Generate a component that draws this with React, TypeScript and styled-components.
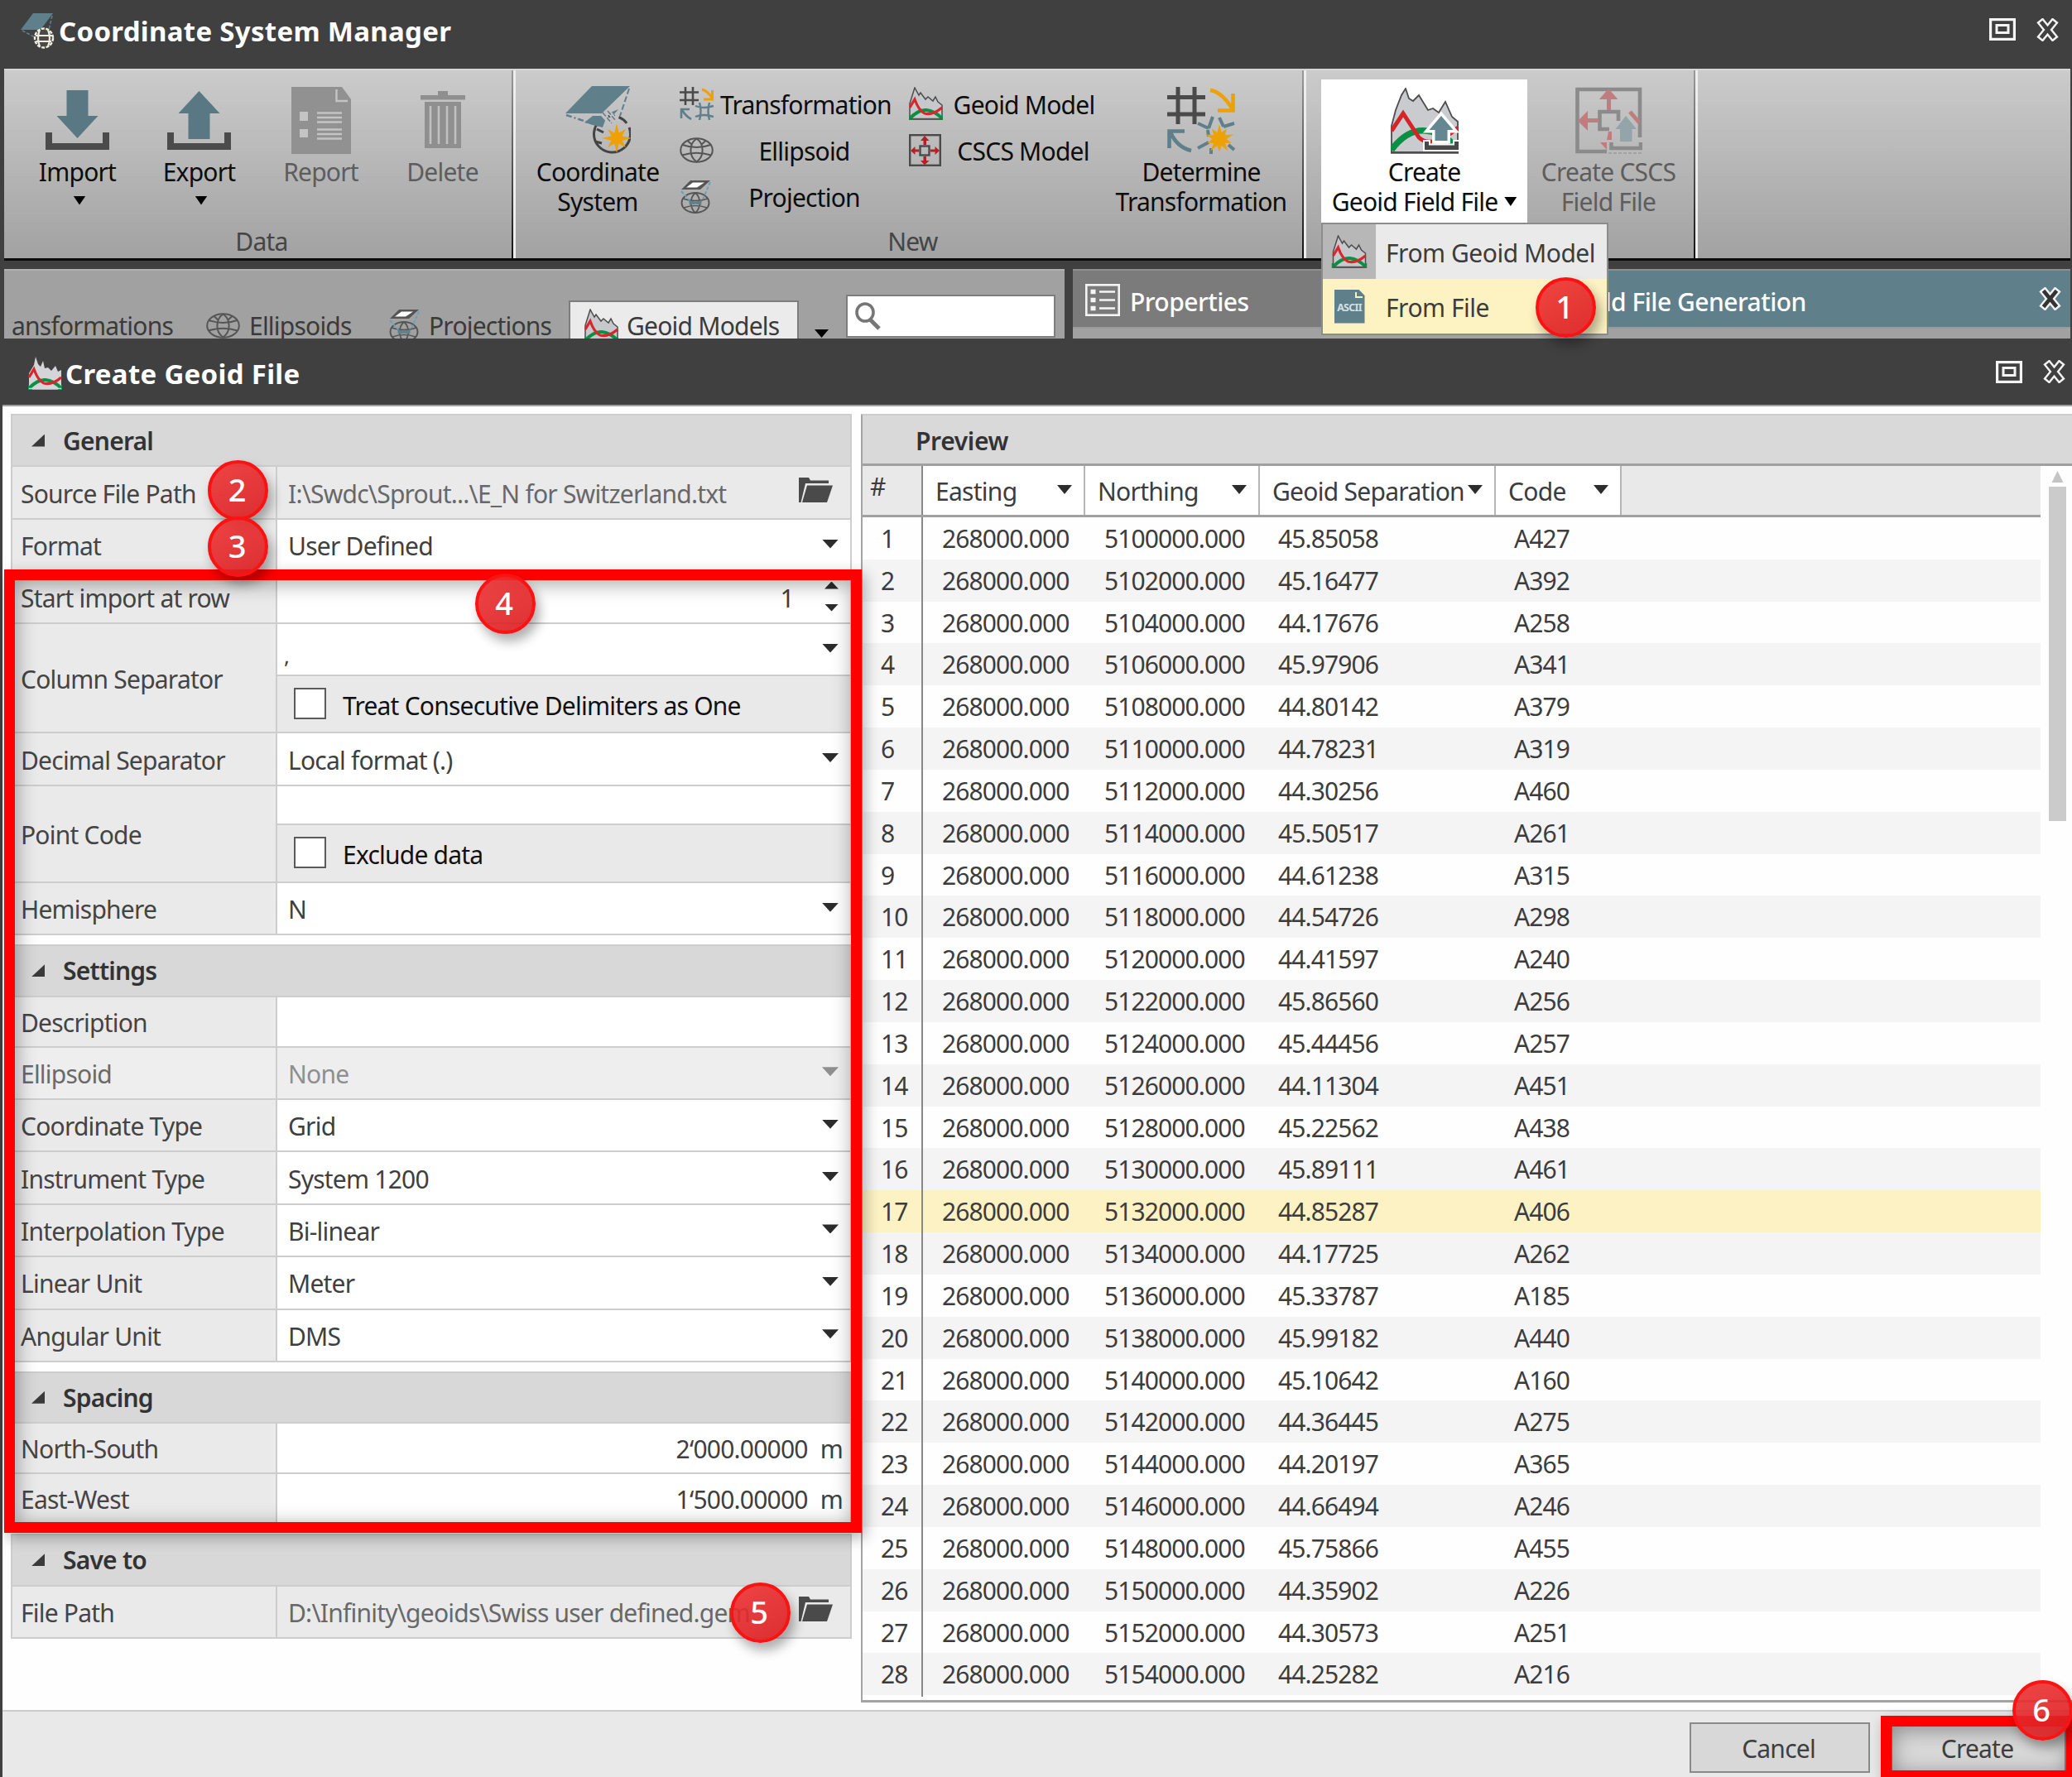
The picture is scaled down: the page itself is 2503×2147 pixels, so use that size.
import React from "react";
import styled, { createGlobalStyle, css } from "styled-components";

const Global = createGlobalStyle`
  *, *::before, *::after { box-sizing: border-box; }
  body {
    margin: 0;
    background: #404040;
    font-family: "Noto Sans", "Open Sans", sans-serif;
    font-size: 30px;
    letter-spacing: -0.026em;
    color: #3c3c3c;
    overflow: hidden;
  }
`;

const steel = "#5f7f8b";
const ink = "#4a4a4a";

/* ---------- shell ---------- */

const Screen = styled.div`
  position: relative;
  width: 2503px;
  height: 2147px;
  display: flex;
  flex-direction: column;
  overflow: hidden;
  white-space: nowrap;
`;

const TitleBar = styled.header<{ $h: number; $left: number; $right: number; $top: number; $bottom: number; $gap: number }>`
  flex: none;
  height: ${(p) => p.$h}px;
  padding: ${(p) => p.$top}px ${(p) => p.$right}px ${(p) => p.$bottom}px ${(p) => p.$left}px;
  display: flex;
  align-items: center;
  gap: ${(p) => p.$gap}px;
  background: #404040;
  color: #fff;
`;

const Title = styled.h1`
  flex: 1;
  margin: 0;
  padding-top: 2px;
  font-size: 33px;
  font-weight: 700;
  line-height: 40px;
  letter-spacing: 0.009em;
`;

const WindowButtons = styled.div`
  display: flex;
  align-items: center;
  gap: 24px;
  margin-top: -3px;
`;

/* ---------- ribbon ---------- */

const Ribbon = styled.section`
  flex: none;
  height: 232px;
  margin: 0 2px 0 5px;
  display: flex;
  border-top: 2px solid #d6d6d6;
  border-bottom: 3px solid #0c0c0c;
  background: linear-gradient(#cbcbcb, #a2a2a2);
  color: #0d0d0d;
`;

const Group = styled.div<{ $w: number; $left: number }>`
  position: relative;
  flex: none;
  width: ${(p) => p.$w}px;
  padding-left: ${(p) => p.$left}px;
  display: grid;
  grid-template-rows: 185px 43px;
  border-right: 3px solid #ededed;

  &::after {
    content: "";
    position: absolute;
    right: 0;
    top: 0;
    bottom: 0;
    width: 2px;
    background: linear-gradient(#9a9a9a, #111);
  }
`;

const GroupBody = styled.div`
  display: flex;
  align-items: flex-start;
`;

const Caption = styled.div<{ $pad: number }>`
  padding-right: ${(p) => p.$pad}px;
  text-align: center;
  line-height: 43px;
  color: #454545;
`;

const BigButton = styled.div<{ $w: number; $active?: boolean; $off?: boolean; $ml?: number }>`
  flex: none;
  width: ${(p) => p.$w}px;
  margin: 11px 0 0 ${(p) => p.$ml ?? 0}px;
  height: 173px;
  padding-top: 8px;
  display: flex;
  flex-direction: column;
  align-items: center;
  text-align: center;
  line-height: 35.6px;
  background: ${(p) => (p.$active ? "#fff" : "transparent")};
  color: ${(p) => (p.$off ? "#5d5d5d" : "#0d0d0d")};
`;

const BigIcon = styled.div<{ $lift?: number }>`
  height: 82px;
  padding-bottom: ${(p) => p.$lift ?? 0}px;
  margin-bottom: 4px;
  display: flex;
  align-items: flex-end;
`;

const WithArrow = styled.span`
  display: flex;
  align-items: center;
  gap: 8px;
`;

const SmallColumn = styled.div<{ $ml: number; $w: number }>`
  flex: none;
  width: ${(p) => p.$w}px;
  margin: 12px 0 0 ${(p) => p.$ml}px;
  display: flex;
  flex-direction: column;
`;

const SmallButton = styled.div`
  height: 56px;
  display: flex;
  align-items: center;
  gap: 8px;

  svg { flex: none; }
  span { flex: 1; padding-top: 2px; text-align: center; }
`;

const Down = styled.i<{ $w?: number; $h?: number; $c?: string; $up?: boolean }>`
  flex: none;
  display: block;
  width: ${(p) => p.$w ?? 18}px;
  height: ${(p) => p.$h ?? 11}px;
  background: ${(p) => p.$c ?? "#2c2c2c"};
  clip-path: ${(p) => (p.$up ? "polygon(50% 0, 100% 100%, 0 100%)" : "polygon(0 0, 100% 0, 50% 100%)")};
`;

const ButtonArrow = styled(Down)`
  margin: 11px 0 0 5px;
`;

const FieldArrow = styled(Down)`
  margin: -5px 2px 0 0;
`;

/* ---------- docked panels behind the dialog ---------- */

const Dock = styled.section`
  flex: none;
  height: 94px;
  margin: 0 2px 0 5px;
  padding-top: 10px;
  display: flex;
  gap: 10px;
  overflow: hidden;
`;

const TabStrip = styled.div`
  width: 1281px;
  height: 84px;
  padding-left: 10px;
  display: flex;
  align-items: flex-start;
  background: #a1a1a1;
  border-top: 2px solid #b0b0b0;
  overflow: hidden;
  color: #3a3a3a;
`;

const Tab = styled.div<{ $w: number; $gap: number; $on?: boolean; $end?: boolean; $pad?: number }>`
  flex: none;
  width: ${(p) => p.$w}px;
  height: 60px;
  margin-top: 36px;
  padding: 0 0 0 ${(p) => p.$pad ?? 0}px;
  display: flex;
  align-items: center;
  justify-content: ${(p) => (p.$end ? "flex-end" : "flex-start")};
  gap: ${(p) => p.$gap}px;
  overflow: hidden;
  background: ${(p) => (p.$on ? "#ebebeb" : "transparent")};
  border: ${(p) => (p.$on ? "2px solid #7d7d7d" : "none")};
`;

const TabMore = styled(Down)`
  margin: 71px 0 0 19px;
`;

const Search = styled.div`
  width: 253px;
  height: 52px;
  margin: 29px 0 0 21px;
  padding: 7px 0 0 9px;
  background: #fff;
  border: 2px solid #7d7d7d;
`;

const DockPanel = styled.div<{ $w: number }>`
  flex: none;
  width: ${(p) => p.$w}px;
  height: 84px;
  display: flex;
  flex-direction: column;
  background: #a1a1a1;
`;

const PanelPair = styled.div`
  display: flex;
`;

const PanelHead = styled.div<{ $bg: string; $pl: number; $pr: number }>`
  height: 72px;
  padding: 6px ${(p) => p.$pr}px 0 ${(p) => p.$pl}px;
  display: flex;
  align-items: center;
  justify-content: space-between;
  background: ${(p) => p.$bg};
  border-top: 2px solid #8f8f8f;
  border-bottom: 2px solid #9b9b9b;
  color: #fff;
  font-weight: 500;
  letter-spacing: -0.017em;

  svg { margin-top: -3px; }
  > svg { margin-top: -7px; }
  span { display: flex; align-items: center; gap: 12px; }
`;

/* ---------- drop-down menu ---------- */

const Menu = styled.div`
  position: absolute;
  left: 1596px;
  top: 269px;
  width: 347px;
  height: 136px;
  display: flex;
  flex-direction: column;
  border: 2px solid #8c8c8c;
  background: #eaeaea;
  letter-spacing: -0.016em;
`;

const MenuItem = styled.div<{ $hot?: boolean }>`
  flex: 1;
  display: flex;
  align-items: center;
  background: ${(p) => (p.$hot ? "#fdf2c2" : "#eaeaea")};

  span { padding-top: 3px; }
`;

const MenuGutter = styled.div<{ $plain?: boolean }>`
  width: 64px;
  height: 100%;
  margin-right: 12px;
  display: flex;
  align-items: center;
  justify-content: center;
  background: ${(p) => (p.$plain ? "transparent" : "#b7b7b7")};
`;

/* ---------- dialog ---------- */

const Dialog = styled.section`
  flex: none;
  height: 1738px;
  padding-left: 3px;
  display: flex;
  flex-direction: column;
`;

const DialogBody = styled.div`
  flex: none;
  height: 1577px;
  padding: 9px 0 0 10px;
  display: flex;
  gap: 11px;
  border-top: 2px solid #a0a0a0;
  background: #fefefe;
`;

const Form = styled.div`
  flex: none;
  width: 1016px;
`;

const Section = styled.div`
  margin-bottom: 10.7px;
  border: 2px solid #cdcdcd;
  border-bottom: 0;
  background: #eaeaea;
`;

const SectionHead = styled.div<{ $h: number }>`
  height: ${(p) => p.$h}px;
  padding-left: 23px;
  display: flex;
  align-items: center;
  gap: 22px;
  background: #d8d8d8;
  border-bottom: 2px solid #cdcdcd;
  font-weight: 600;
  color: #333;

  &::before {
    content: "";
    width: 16px;
    height: 15px;
    background: #3a3a3a;
    clip-path: polygon(100% 0, 100% 100%, 0 100%);
  }
`;

const Row = styled.div<{ $h: number; $off?: boolean }>`
  height: ${(p) => p.$h}px;
  display: grid;
  grid-template-columns: 320px 1fr;
  border-bottom: 2px solid #cdcdcd;
  background: ${(p) => (p.$off ? "#eeeeee" : "#eaeaea")};
  color: ${(p) => (p.$off ? "#6a6a6a" : "#444")};
`;

const RowLabel = styled.div`
  padding: 2px 0 0 10px;
  display: flex;
  align-items: center;
  border-right: 2px solid #cdcdcd;
`;

const Field = styled.div<{ $bg?: string; $h?: number; $c?: string; $end?: boolean }>`
  height: ${(p) => (p.$h ? p.$h + "px" : "100%")};
  padding: 2px 12px 0 13px;
  display: flex;
  align-items: center;
  justify-content: ${(p) => (p.$end ? "flex-end" : "space-between")};
  background: ${(p) => p.$bg ?? "#fff"};
  color: ${(p) => p.$c ?? "#3f3f3f"};
`;

const Stack = styled.div`
  display: flex;
  flex-direction: column;
`;

const StackField = styled(Field)<{ $line?: boolean; $check?: boolean }>`
  ${(p) => p.$line && css`border-bottom: 2px solid #cdcdcd;`}
  ${(p) =>
    p.$check &&
    css`
      flex: 1;
      padding: 3px 0 0 20px;
      justify-content: flex-start;
      gap: 20px;
      color: #111;
    `}
`;

const CheckBox = styled.i`
  width: 39px;
  height: 38px;
  margin-top: -5px;
  background: #fff;
  border: 2px solid #5a5a5a;
`;

const Comma = styled.span`
  align-self: flex-end;
  margin: 0 0 3px -5px;
  line-height: 40px;
  font-size: 26px;
`;

const Spinner = styled.div`
  width: 100%;
  padding-right: 2px;
  display: flex;
  justify-content: flex-end;
  align-items: center;
  gap: 37px;

  div { display: flex; flex-direction: column; gap: 18px; margin-top: -4px; }
`;

const Unit = styled.span`
  margin: 0 -3px 0 15px;
`;

const FolderCell = styled.span`
  margin: -8px 8px 0 0;
  display: flex;
`;

/* ---------- preview ---------- */

const Preview = styled.div`
  flex: 1;
  height: 1557px;
  border-left: 2px solid #a3a3a3;
  border-bottom: 3px solid #a3a3a3;
  border-top: 2px solid #cdcdcd;
`;

const PreviewHead = styled.div`
  height: 61px;
  padding-left: 64px;
  line-height: 61px;
  font-weight: 600;
  letter-spacing: -0.012em;
  color: #333;
  background: #d9d9d9;
  border-bottom: 3px solid #a0a0a0;
`;

const PreviewMain = styled.div`
  display: flex;
`;

const Grid = styled.div`
  flex: none;
  width: 1423px;
  letter-spacing: -0.03em;
`;

const columns = "73px 196px 211px 285px 152px 1fr";

const GridHead = styled.div`
  height: 62px;
  display: grid;
  grid-template-columns: ${columns};
  background: #e9e9e9;
  border-bottom: 3px solid #a0a0a0;
  letter-spacing: -0.024em;
`;

const HeadCell = styled.div<{ $first?: boolean }>`
  padding: 2px 14px 0 15px;
  display: flex;
  align-items: center;
  justify-content: space-between;
  background: ${(p) => (p.$first ? "#e9e9e9" : "#fff")};
  border-right: 2px solid ${(p) => (p.$first ? "#888" : "#b5b5b5")};

  i { margin-top: -4px; }
`;

const Hash = styled(HeadCell)`
  padding: 0 0 10px 9px;
`;

const GridRow = styled.div<{ $bg: string }>`
  height: 50.84px;
  display: grid;
  grid-template-columns: ${columns};
  align-items: stretch;
  line-height: 52.6px;
  background: ${(p) => p.$bg};
`;

const Cell = styled.div<{ $pl: number; $rule?: boolean }>`
  height: 100%;
  padding-left: ${(p) => p.$pl}px;
  ${(p) => p.$rule && css`border-right: 2px solid #888;`}
`;

const ScrollBar = styled.div`
  width: 21px;
  margin-left: 10px;
  padding-top: 6px;
  display: flex;
  flex-direction: column;
  align-items: center;
  gap: 5px;
`;

const Thumb = styled.div`
  width: 21px;
  height: 404px;
  background: #cbcbcb;
`;

const Footer = styled.footer`
  flex: 1;
  padding: 13px 7px 0 0;
  display: flex;
  justify-content: flex-end;
  align-items: flex-start;
  gap: 25px;
  border-top: 2px solid #cbcbcb;
  background: #e9e9e9;
`;

const Button = styled.button<{ $w: number }>`
  width: ${(p) => p.$w}px;
  height: 61px;
  padding: 1px 3px 0 0;
  border: 2px solid #8a8a8a;
  background: #d8d8d8;
  font: inherit;
  letter-spacing: inherit;
  color: #3f3f3f;
`;

/* ---------- annotations drawn over the windows ---------- */

const Frame = styled.div<{ $x: number; $y: number; $w: number; $h: number }>`
  position: absolute;
  left: ${(p) => p.$x}px;
  top: ${(p) => p.$y}px;
  width: ${(p) => p.$w}px;
  height: ${(p) => p.$h}px;
  border: 13px solid #fe0000;
  box-shadow: 4px 6px 16px rgba(0, 0, 0, 0.3), inset 2px 4px 24px rgba(0, 0, 0, 0.36);
`;

const Callout = styled.div<{ $cx: number; $cy: number }>`
  position: absolute;
  left: ${(p) => p.$cx - 36.5}px;
  top: ${(p) => p.$cy - 36.5}px;
  width: 73px;
  height: 73px;
  padding-right: 2px;
  border-radius: 50%;
  border: 4px solid #fb1212;
  background: linear-gradient(150deg, rgba(238, 50, 50, 0.9), rgba(218, 26, 30, 0.9));
  box-shadow: 5px 9px 14px rgba(0, 0, 0, 0.32);
  color: #fff;
  font-size: 38px;
  font-weight: 500;
  letter-spacing: 0;
  line-height: 62px;
  text-align: center;
`;

/* ---------- icons ---------- */

const MaxIcon = () => (
  <svg width="32" height="27" viewBox="0 0 32 27" fill="none" stroke="#f4f4f4">
    <rect x="1.6" y="1.6" width="28.8" height="23.8" strokeWidth="3.2" />
    <rect x="9" y="8.5" width="14" height="9" strokeWidth="3" />
  </svg>
);

const CloseIcon = ({ core = "#404040" }: { core?: string }) => (
  <svg width="29" height="28" viewBox="0 0 29 28" fill="none" strokeLinecap="square">
    <path d="M8 6 21 22M21 6 8 22" stroke="#f2f2f2" strokeWidth="9.5" strokeLinejoin="round" />
    <path d="M8 6 21 22M21 6 8 22" stroke={core} strokeWidth="4.6" />
  </svg>
);

const burst = (cx: number, cy: number, r: number, inner: number, n: number) =>
  Array.from({ length: n * 2 }, (_, i) => {
    const a = (Math.PI * i) / n - Math.PI / 2;
    const d = i % 2 ? inner : i % 4 === 0 ? r : r * 0.86;
    return `${(cx + d * Math.cos(a)).toFixed(1)},${(cy + d * Math.sin(a)).toFixed(1)}`;
  }).join(" ");

const ImportIcon = ({ up }: { up?: boolean }) => (
  <svg width="77" height="72" viewBox="0 0 77 72">
    <path d="M0 51h8v13h61V51h8v21H0z" fill="#4b4b4b" />
    <path d={up ? "M38.500 1 63.500 28H51.500V59H25.500V28H13.500z" : "M25.500 0H51.500V31H63.500L38.500 58 13.500 31H25.500z"} fill="#597883" />
  </svg>
);

const ReportIcon = () => (
  <svg width="72" height="81" viewBox="0 0 72 81">
    <path d="M0 0H61L72 15V81H0z" fill="#919191" />
    <path d="M54.500 3V17H68" fill="none" stroke="#c4c4c4" strokeWidth="2.400" />
    <path d="M10 30H20V41H10zM10 51H20V61H10z" fill="#c4c4c4" />
    <path d="M31 31.500H61M31 37H61M31 42.500H61M31 51.500H61M31 57H61M31 62.500H61" stroke="#c4c4c4" strokeWidth="2.300" />
  </svg>
);

const TrashIcon = () => (
  <svg width="54" height="69" viewBox="0 0 54 69" fill="#8f8f8f">
    <path d="M21 0H33V5H54V10.500H0V5H21zM5 13H49V69H5z" />
    <path d="M12 18V64M22 18V64M32 18V64M42 18V64" stroke="#c0c0c0" strokeWidth="2.600" />
  </svg>
);

const CoordIcon = () => (
  <svg width="79" height="82" viewBox="0 0 79 82" fill="none">
    <circle cx="56.500" cy="58" r="22" stroke="#444" strokeWidth="3" strokeDasharray="58 4 8 5 12 6" transform="rotate(95 56.500 58)" />
    <path d="M23 44 33 36H50L45 50zM52 33 64 28 58 35z" fill={steel} />
    <path d="M38 52 46 56M36 67 44 69" stroke="#444" strokeWidth="3" />
    <path d="M44 33 56 47M51 29 61 42" stroke="#c2c2c2" strokeWidth="5" />
    <path d="M45 32 56 45M51 30 61 42" stroke={steel} strokeWidth="1.600" strokeDasharray="6 2" />
    <path d="M32 0H78L44 33H0z" fill={steel} />
    <path d="M1 35 40 48" stroke={steel} strokeWidth="2.400" strokeDasharray="7 3 2 3" />
    <path d="M77 3 66 36" stroke={steel} strokeWidth="2" strokeDasharray="7 3" />
    <polygon points={burst(62, 63, 18, 7, 8)} fill="#eea104" />
  </svg>
);

const SmallCoordIcon = () => (
  <svg width="41" height="43" viewBox="0 0 41 43" fill="none">
    <path d="M15 0H39L24 20H0z" fill={steel} />
    <path d="M2 21 17 29M38 3 34 20" stroke={steel} strokeWidth="1.600" strokeDasharray="4 2" />
    <ellipse cx="28" cy="30" rx="11" ry="11.500" fill="#4a4a46" stroke="#efeee0" strokeWidth="2.400" strokeDasharray="4 1.500" />
    <path d="M18 27H38M19 34H37M23 20Q19 30 23 40M33 20Q37 30 33 40" stroke="#efeee0" strokeWidth="2.200" />
  </svg>
);

const GlobeIcon = () => (
  <svg width="41" height="31" viewBox="0 0 41 31" fill="none" stroke="#555" strokeWidth="2">
    <ellipse cx="20.500" cy="15.500" rx="19.300" ry="14.300" />
    <path d="M20.500 1.500C11 8 11 23 20.500 29.500C30 23 30 8 20.500 1.500M3.500 9Q20.500 15 37.500 9M3 21.500Q20.500 16 38 21.500M9 3.500 15 9M32 3.500 26 9" />
  </svg>
);

const ProjectionIcon = () => (
  <svg width="41" height="41" viewBox="0 0 41 41" fill="none">
    <ellipse cx="19" cy="28" rx="16.500" ry="12" stroke="#555" strokeWidth="2" />
    <path d="M19 16C12 22 12 34 19 40C26 34 26 22 19 16M4 23Q19 28 34 23M5 34Q19 29 33 34" stroke="#555" strokeWidth="1.700" />
    <path d="M11 24Q19 29 27 24L26 31Q19 28 12 31z" fill={steel} />
    <path d="M2 14 12 25M37 3 28 24" stroke="#6ea0b3" strokeWidth="2" strokeDasharray="4 2" />
    <path d="M13 1H37L25 12H2z" fill="#555" />
    <path d="M16 3.500H30L21 9.500H8z" fill="#fff" />
  </svg>
);

const TransformIcon = () => (
  <svg width="41" height="40" viewBox="0 0 41 40" fill="none">
    <path d="M7 0V22M16 0V22M0 6.500H23M0 16H23" stroke="#4a4a4a" strokeWidth="2.600" />
    <path d="M27 3Q34 5 39 13M39.500 4V15H29" stroke="#eea104" strokeWidth="3" />
    <path d="M2 38V27H12M3 28Q7 35 14 39" stroke={steel} strokeWidth="2.600" />
    <path d="M24 19Q27 29 24 40M36 19Q33 29 36 40M19 23Q29 27 41 23M19 36Q29 32 41 36" stroke={steel} strokeWidth="2.400" />
  </svg>
);

const DetermineIcon = () => (
  <svg width="82" height="81" viewBox="0 0 82 81" fill="none">
    <path d="M13 0V45M33 0V45M0 12.500H46M0 33H46" stroke="#4a4a4a" strokeWidth="5" />
    <path d="M52 4Q66 6 79 27M79.500 8V28.500H61" stroke="#eea104" strokeWidth="4.600" />
    <path d="M2.500 74V53.500H21M4 55Q12 73 29 77" stroke={steel} strokeWidth="4.600" />
    <path d="M37 44 50 50M50 50 55 36M63 37 68 48M68 48 81 44M49 52 50 60M37 74 50 67M53 74V81M74 70 81 76" stroke={steel} strokeWidth="4" />
    <polygon points={burst(63, 63, 18, 8.500, 10)} fill="#eea104" />
  </svg>
);

const GeoidIcon = ({ w = 41, h = 40, light }: { w?: number; h?: number; light?: boolean }) => (
  <svg width={w} height={h} viewBox="0 0 41 40" fill="none">
    <path
      d={
        light
          ? "M1 39V20L7 10 9 0 12 9 15 12 18 5 20 14 24 13 28 17 33 11 36 18 40 16V39z"
          : "M1 39V20L7 1 12 10 14 7 20 15 23 12 29 17 32 12 35 18 40 22V39z"
      }
      fill={light ? "#d3d5d9" : "#c6c8cb"}
      stroke={light ? "none" : "#4c4c4c"}
      strokeWidth="1.500"
    />
    <path d="M1 38Q12 27 21 28Q31 29 40 38" stroke="#0a8f43" strokeWidth="4" />
    <path d="M1 25 7 15Q12 29 19 32Q28 35 40 25" stroke="#d9262c" strokeWidth="3.200" />
    <path d="M0 38.800H41" stroke={light ? "#d3d5d9" : "#555"} strokeWidth="2" />
    <path d="M0 34V40H5M41 34V40H36" stroke="#0a8f43" strokeWidth="1.500" />
  </svg>
);

const GeoidFieldIcon = () => (
  <svg width="82" height="80" viewBox="0 0 82 80" fill="none">
    <path
      d="M1 78V46L6 27 13 9 18 1 22 13 27 16 34 9 45 27 51 25 58 30 66 17 74 35 81 41V78z"
      fill="#c9cbcf"
      stroke="#4c4c4c"
      strokeWidth="1.800"
    />
    <path d="M1 75Q20 50 42 52Q66 54 81 75" stroke="#0a9044" strokeWidth="7.500" />
    <path d="M1 52 15 31 34 60Q42 68 55 64T81 48" stroke="#d6232a" strokeWidth="5" />
    <path d="M0 78.500H82" stroke="#4c4c4c" strokeWidth="2.600" />
    <path d="M61 34 75.500 51H68.500V64H53.500V51H46.500z" fill="#658792" stroke="#fff" strokeWidth="7" paintOrder="stroke" />
    <path d="M41 65H46V69.500H77V65H82V75H41z" fill="#484848" stroke="#fff" strokeWidth="4" paintOrder="stroke" />
  </svg>
);

const CscsIcon = () => (
  <svg width="39" height="39" viewBox="0 0 39 39" fill="none">
    <rect x="1.200" y="1.200" width="36.600" height="36.600" stroke="#4a4a4a" strokeWidth="2.400" />
    <rect x="13.500" y="14.500" width="11" height="11" stroke="#4a4a4a" strokeWidth="2.400" />
    <path d="M19 2 24.500 8H21V13H17.500V8H14zM19 37.500 24.500 32H21V27H17.500V32H14zM2 20 7.500 15V18.500H12V21.500H7.500V25zM37 20 31.500 15V18.500H26V21.500H31.500V25z" fill="#b81f25" />
  </svg>
);

const CscsFieldIcon = () => (
  <svg width="81" height="81" viewBox="0 0 81 81" fill="none">
    <path d="M78 61V3H2.500V78H38" stroke="#8b8b8b" strokeWidth="4.600" />
    <path d="M52 41V30H29.500V51H41" stroke="#8b8b8b" strokeWidth="4.600" />
    <path d="M40 2 51.500 15H43V28H38V15H29zM3 41 15 29V38H28V43H15V53zM40 54H44V64L38 64zM30 67H38V76z" fill="#c07d80" />
    <path d="M66 30 77 43" stroke="#c07d80" strokeWidth="5" />
    <path d="M61 35 74 51H68.500V66H54V51H48.500z" fill="#93a4aa" />
    <path d="M43.500 67V74H79V67" stroke="#8b8b8b" strokeWidth="4.600" />
    <path d="M40 80H81" stroke="#9a9a9a" strokeWidth="1.500" strokeDasharray="4 2" />
  </svg>
);

const AsciiArt = styled.div`
  position: relative;
  width: 37px;
  height: 41px;
  padding-top: 4px;
  display: flex;
  align-items: center;
  justify-content: center;
  background: ${steel};
  clip-path: polygon(0 0, 80% 0, 100% 18%, 100% 100%, 0 100%);
  color: #d5dfe3;
  font-size: 12.5px;
  font-weight: 700;
  line-height: 1;
  letter-spacing: -0.06em;

  &::after {
    content: "";
    position: absolute;
    right: 3px;
    top: 3px;
    width: 9px;
    height: 7px;
    border-left: 2px solid #fdf2c2;
    border-bottom: 2px solid #fdf2c2;
  }
`;

const ListIcon = () => (
  <svg width="42" height="39" viewBox="0 0 42 39" fill="none" stroke="#f5f5f5">
    <rect x="1.300" y="1.300" width="39.400" height="36.400" strokeWidth="2.600" />
    <path d="M17 9.500H36M17 19.500H36M17 29.500H36" strokeWidth="2.600" />
    <path d="M6.500 9.500H12.500M6.500 19.500H12.500M6.500 29.500H12.500" strokeWidth="5.500" />
  </svg>
);

const SearchIcon = () => (
  <svg width="31" height="34" viewBox="0 0 31 34" fill="none" stroke="#767676">
    <ellipse cx="12" cy="12.500" rx="10" ry="10.500" strokeWidth="3.600" />
    <path d="M18 21 29 32" strokeWidth="5" />
  </svg>
);

const FolderIcon = () => (
  <svg width="42" height="32" viewBox="0 0 42 32" fill={ink}>
    <path d="M0 31V1H12L14 4.500H36V8H8L2.500 31z" />
    <path d="M10 10.500H41L34 31H4z" />
  </svg>
);

/* ---------- data ---------- */

const samples: [string, string][] = [
  ["45.85058", "A427"], ["45.16477", "A392"], ["44.17676", "A258"], ["45.97906", "A341"],
  ["44.80142", "A379"], ["44.78231", "A319"], ["44.30256", "A460"], ["45.50517", "A261"],
  ["44.61238", "A315"], ["44.54726", "A298"], ["44.41597", "A240"], ["45.86560", "A256"],
  ["45.44456", "A257"], ["44.11304", "A451"], ["45.22562", "A438"], ["45.89111", "A461"],
  ["44.85287", "A406"], ["44.17725", "A262"], ["45.33787", "A185"], ["45.99182", "A440"],
  ["45.10642", "A160"], ["44.36445", "A275"], ["44.20197", "A365"], ["44.66494", "A246"],
  ["45.75866", "A455"], ["44.35902", "A226"], ["44.30573", "A251"], ["44.25282", "A216"],
];

const rowColor = (i: number) => (i === 16 ? "#fdf2c4" : i % 2 ? "#f4f4f4" : "#fefefe");

const SelectRow = ({ label, value, h = 63.4, off }: { label: string; value: string; h?: number; off?: boolean }) => (
  <Row $h={h} $off={off}>
    <RowLabel>{label}</RowLabel>
    <Field $bg={off ? "#eeeeee" : undefined} $c={off ? "#8f8f8f" : undefined}>
      {value}
      <FieldArrow $w={20} $h={11} $c={off ? "#8f8f8f" : undefined} />
    </Field>
  </Row>
);

const PathRow = ({ label, value, h }: { label: string; value: string; h: number }) => (
  <Row $h={h}>
    <RowLabel>{label}</RowLabel>
    <Field $bg="#eaeaea" $c="#686868">
      {value}
      <FolderCell><FolderIcon /></FolderCell>
    </Field>
  </Row>
);

const UnitRow = ({ label, value }: { label: string; value: string }) => (
  <Row $h={61}>
    <RowLabel>{label}</RowLabel>
    <Field $end>
      {value}
      <Unit>m</Unit>
    </Field>
  </Row>
);

export default function App() {
  return (
    <Screen>
      <Global />
      <TitleBar $h={83} $left={25} $right={15} $top={0} $bottom={9} $gap={5}>
        <SmallCoordIcon />
        <Title>Coordinate System Manager</Title>
        <WindowButtons>
          <MaxIcon />
          <CloseIcon />
        </WindowButtons>
      </TitleBar>

      <Ribbon>
        <Group $w={618} $left={15}>
          <GroupBody>
            <BigButton $w={147}>
              <BigIcon $lift={5}><ImportIcon /></BigIcon>
              Import
              <ButtonArrow $w={15} $h={11} $c="#000" />
            </BigButton>
            <BigButton $w={147}>
              <BigIcon $lift={5}><ImportIcon up /></BigIcon>
              Export
              <ButtonArrow $w={15} $h={11} $c="#000" />
            </BigButton>
            <BigButton $w={147} $off>
              <BigIcon><ReportIcon /></BigIcon>
              Report
            </BigButton>
            <BigButton $w={147} $off>
              <BigIcon $lift={7}><TrashIcon /></BigIcon>
              Delete
            </BigButton>
          </GroupBody>
          <Caption $pad={8}>Data</Caption>
        </Group>
        <Group $w={955} $left={19}>
          <GroupBody>
            <BigButton $w={160}>
              <BigIcon><CoordIcon /></BigIcon>
              <span>Coordinate<br />System</span>
            </BigButton>
            <SmallColumn $ml={19} $w={252}>
              <SmallButton><TransformIcon /><span>Transformation</span></SmallButton>
              <SmallButton><GlobeIcon /><span>Ellipsoid</span></SmallButton>
              <SmallButton><ProjectionIcon /><span>Projection</span></SmallButton>
            </SmallColumn>
            <SmallColumn $ml={25} $w={229}>
              <SmallButton><GeoidIcon /><span>Geoid Model</span></SmallButton>
              <SmallButton><CscsIcon /><span>CSCS Model</span></SmallButton>
            </SmallColumn>
            <BigButton $w={210} $ml={19}>
              <BigIcon><DetermineIcon /></BigIcon>
              <span>Determine<br />Transformation</span>
            </BigButton>
          </GroupBody>
          <Caption $pad={12}>New</Caption>
        </Group>
        <Group $w={473} $left={18}>
          <GroupBody>
            <BigButton $w={249} $active>
              <BigIcon><GeoidFieldIcon /></BigIcon>
              Create
              <WithArrow>Geoid Field File<Down $w={15} $h={11} $c="#000" /></WithArrow>
            </BigButton>
            <BigButton $w={190} $ml={3} $off>
              <BigIcon><CscsFieldIcon /></BigIcon>
              <span>Create CSCS<br />Field File</span>
            </BigButton>
          </GroupBody>
        </Group>
      </Ribbon>

      <Dock>
        <TabStrip>
          <Tab $w={194} $gap={0} $end>Transformations</Tab>
          <Tab $w={220} $gap={11} $pad={40}><GlobeIcon /><span>Ellipsoids</span></Tab>
          <Tab $w={258} $gap={8} $pad={40}><ProjectionIcon /><span>Projections</span></Tab>
          <Tab $w={278} $gap={10} $pad={17} $on><GeoidIcon /><span>Geoid Models</span></Tab>
          <TabMore $w={17} $h={10} $c="#000" />
          <Search><SearchIcon /></Search>
        </TabStrip>
        <PanelPair>
          <DockPanel $w={400}>
            <PanelHead $bg="#7b7b7b" $pl={15} $pr={0}>
              <span><ListIcon />Properties</span>
            </PanelHead>
          </DockPanel>
          <DockPanel $w={805}>
            <PanelHead $bg={steel} $pl={114} $pr={10}>
              Geoid Field File Generation
              <CloseIcon core="#333" />
            </PanelHead>
          </DockPanel>
        </PanelPair>
      </Dock>

      <Dialog>
        <TitleBar $h={80} $left={31} $right={7} $top={3} $bottom={0} $gap={4}>
          <GeoidIcon light />
          <Title>Create Geoid File</Title>
          <WindowButtons>
            <MaxIcon />
            <CloseIcon />
          </WindowButtons>
        </TitleBar>

        <DialogBody>
          <Form>
            <Section>
              <SectionHead $h={62}>General</SectionHead>
              <PathRow label="Source File Path" value="I:\Swdc\Sprout...\E_N for Switzerland.txt" h={64} />
              <SelectRow label="Format" value="User Defined" h={63} />
              <Row $h={63}>
                <RowLabel>Start import at row</RowLabel>
                <Field>
                  <Spinner>
                    1
                    <div>
                      <Down $w={17} $h={9} $up />
                      <Down $w={17} $h={9} />
                    </div>
                  </Spinner>
                </Field>
              </Row>
              <Row $h={132}>
                <RowLabel>Column Separator</RowLabel>
                <Stack>
                  <StackField $h={63} $line>
                    <Comma>,</Comma>
                    <FieldArrow $w={20} $h={11} />
                  </StackField>
                  <StackField $bg="#e9e9e9" $check>
                    <CheckBox />
                    <span>Treat Consecutive Delimiters as One</span>
                  </StackField>
                </Stack>
              </Row>
              <SelectRow label="Decimal Separator" value="Local format (.)" h={64} />
              <Row $h={117}>
                <RowLabel>Point Code</RowLabel>
                <Stack>
                  <StackField $h={47} $line />
                  <StackField $bg="#e9e9e9" $check>
                    <CheckBox />
                    <span>Exclude data</span>
                  </StackField>
                </Stack>
              </Row>
              <SelectRow label="Hemisphere" value="N" />
            </Section>

            <Section>
              <SectionHead $h={61.5}>Settings</SectionHead>
              <Row $h={61}>
                <RowLabel>Description</RowLabel>
                <Field />
              </Row>
              <SelectRow label="Ellipsoid" value="None" off />
              <SelectRow label="Coordinate Type" value="Grid" />
              <SelectRow label="Instrument Type" value="System 1200" />
              <SelectRow label="Interpolation Type" value="Bi-linear" />
              <SelectRow label="Linear Unit" value="Meter" />
              <SelectRow label="Angular Unit" value="DMS" />
            </Section>

            <Section>
              <SectionHead $h={61.5}>Spacing</SectionHead>
              <UnitRow label="North-South" value="2‘000.00000" />
              <UnitRow label="East-West" value="1‘500.00000" />
            </Section>

            <Section>
              <SectionHead $h={62}>Save to</SectionHead>
              <PathRow label="File Path" value="D:\Infinity\geoids\Swiss user defined.gem" h={63} />
            </Section>
          </Form>

          <Preview>
            <PreviewHead>Preview</PreviewHead>
            <PreviewMain>
              <Grid>
                <GridHead>
                  <Hash $first>#</Hash>
                  <HeadCell>Easting<Down /></HeadCell>
                  <HeadCell>Northing<Down /></HeadCell>
                  <HeadCell>Geoid Separation<Down /></HeadCell>
                  <HeadCell>Code<Down /></HeadCell>
                </GridHead>
                {samples.map(([sep, code], i) => (
                  <GridRow key={code} $bg={rowColor(i)}>
                    <Cell $pl={22} $rule>{i + 1}</Cell>
                    <Cell $pl={23}>268000.000</Cell>
                    <Cell $pl={23}>{5100 + i * 2}000.000</Cell>
                    <Cell $pl={22}>{sep}</Cell>
                    <Cell $pl={22}>{code}</Cell>
                  </GridRow>
                ))}
              </Grid>
              <ScrollBar>
                <Down $w={14} $h={14} $c="#c4c4c4" $up />
                <Thumb />
              </ScrollBar>
            </PreviewMain>
          </Preview>
        </DialogBody>

        <Footer>
          <Button $w={218}>Cancel</Button>
          <Button $w={212}>Create</Button>
        </Footer>
      </Dialog>

      <Menu>
        <MenuItem>
          <MenuGutter><GeoidIcon w={44} h={40} /></MenuGutter>
          <span>From Geoid Model</span>
        </MenuItem>
        <MenuItem $hot>
          <MenuGutter $plain><AsciiArt>ASCII</AsciiArt></MenuGutter>
          <span>From File</span>
        </MenuItem>
      </Menu>

      <Frame $x={5} $y={688} $w={1036} $h={1164} />
      <Frame $x={2272} $y={2073} $w={237} $h={79} />
      <Callout $cx={1891} $cy={371}>1</Callout>
      <Callout $cx={287.5} $cy={592}>2</Callout>
      <Callout $cx={287.5} $cy={660}>3</Callout>
      <Callout $cx={610} $cy={729}>4</Callout>
      <Callout $cx={918} $cy={1948.5}>5</Callout>
      <Callout $cx={2467} $cy={2066}>6</Callout>
    </Screen>
  );
}
